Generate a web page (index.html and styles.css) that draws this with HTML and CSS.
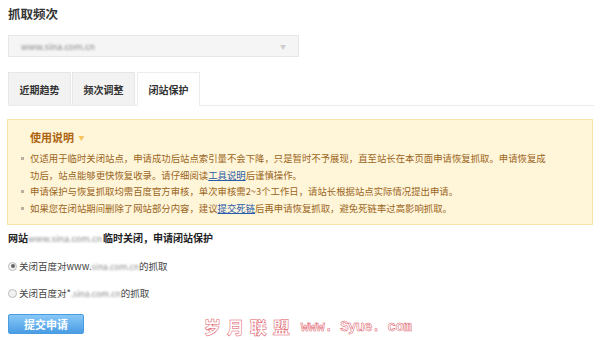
FILE: index.html
```html
<!DOCTYPE html>
<html lang="zh-CN">
<head>
  <meta charset="UTF-8" />
  <title>抓取频次 - 闭站保护</title>
  <link rel="stylesheet" href="styles.css">
</head>
<body>
  <div class="page">
    <h3 class="title">抓取频次</h3>

    <div class="site-select">
      <span class="blur">www.sina.com.cn</span>
      <span class="arrow">▼</span>
    </div>

    <div class="tabs">
      <a href="#" class="tab">近期趋势</a>
      <a href="#" class="tab">频次调整</a>
      <a href="#" class="tab active">闭站保护</a>
    </div>

    <div class="notice">
      <div class="notice-title">使用说明 <span class="caret">▼</span></div>
      <ul class="notice-list">
        <li>仅适用于临时关闭站点，申请成功后站点索引量不会下降，只是暂时不予展现，直至站长在本页面申请恢复抓取。申请恢复成功后，站点能够更快恢复收录。请仔细阅读<a href="#">工具说明</a>后谨慎操作。</li>
        <li>申请保护与恢复抓取均需百度官方审核，单次审核需2~3个工作日，请站长根据站点实际情况提出申请。</li>
        <li>如果您在闭站期间删除了网站部分内容，建议<a href="#">提交死链</a>后再申请恢复抓取，避免死链率过高影响抓取。</li>
      </ul>
    </div>

    <div class="apply-title">网站<span class="blur domain">www.sina.com.cn</span>临时关闭，申请闭站保护</div>

    <div class="option">
      <span class="radio checked"></span>关闭百度对www.<span class="blur">sina.com.cn</span>的抓取
    </div>
    <div class="option">
      <span class="radio"></span>关闭百度对*<span class="blur">.sina.com.cn</span>的抓取
    </div>

    <div class="actions">
      <button class="submit-btn">提交申请</button>
      <div class="watermark">
        <span class="wm-cn">岁 月 联 盟</span>
        <span class="wm-en">www. Syue. com</span>
      </div>
    </div>
  </div>
</body>
</html>
```

FILE: styles.css
```css
body {
  margin: 0;
  padding: 0;
  background: #fff;
  font-family: "Noto Sans CJK SC", "Noto Sans", sans-serif;
  color: #333;
}

.page {
  padding: 6px 7px 0 8px;
}

.title {
  margin: 0;
  font-size: 12.5px;
  line-height: 16px;
  font-weight: bold;
  color: #333;
}

.blur {
  color: #888;
  filter: blur(1.3px);
}

.site-select {
  margin-top: 13px;
  height: 20px;
  border: 1px solid #e6e6e6;
  background: #f5f5f5;
  display: flex;
  justify-content: space-between;
  align-items: center;
  padding: 0 12px;
  width: 265px;
  font-size: 9px;
}

.site-select .arrow {
  color: #ccc;
  font-size: 6px;
}

.tabs {
  margin-top: 15px;
  display: flex;
  gap: 1px;
  height: 34px;
  border-bottom: 1px solid #ececec;
  box-sizing: border-box;
  width: 586px;
}

.tab {
  width: 63px;
  height: 33px;
  display: flex;
  align-items: center;
  justify-content: center;
  background: #f2f2f2;
  border: 1px solid #e6e6e6;
  border-bottom: none;
  box-sizing: border-box;
  font-size: 10px;
  font-weight: bold;
  color: #333;
  text-decoration: none;
}

.tab.active {
  margin-left: 1px;
  background: #fff;
  height: 34px;
  border-color: #ececec;
}

.notice {
  margin-top: 13px;
  margin-left: -1px;
  width: 586px;
  height: 106px;
  box-sizing: border-box;
  background: #fff5d9;
  border: 1px solid #f6e3ad;
  padding: 9px 42px 0 22px;
  color: #9a651c;
}

.notice-title {
  font-size: 11px;
  line-height: 16px;
  font-weight: bold;
  color: #ad640f;
}

.caret {
  color: #f7c35a;
  font-size: 6px;
  vertical-align: 2px;
  margin-left: 2px;
}

.notice-list {
  list-style: none;
  margin: 4px 0 0;
  padding: 0;
  font-size: 9.4px;
  line-height: 16.5px;
}

.notice-list li {
  position: relative;
}

.notice-list li::before {
  content: "";
  position: absolute;
  left: -9px;
  top: 7px;
  width: 3px;
  height: 3px;
  background: #b8b0a0;
}

.notice-list a {
  color: #2a5caa;
  text-decoration: underline;
}

.apply-title {
  margin-top: 5px;
  font-size: 10px;
  line-height: 16px;
  font-weight: bold;
  color: #222;
}

.apply-title .domain {
  display: inline-block;
  width: 75px;
  font-weight: normal;
  font-size: 9px;
}

.option {
  margin-top: 11px;
  font-size: 9.5px;
  line-height: 16px;
  color: #444;
  display: flex;
  align-items: center;
}

.option .blur {
  font-size: 8.5px;
}

.radio {
  width: 9px;
  height: 9px;
  border: 1px solid #bbb;
  border-radius: 50%;
  background: #f2f2f2;
  margin-right: 2px;
  box-sizing: border-box;
  display: inline-flex;
  align-items: center;
  justify-content: center;
}

.radio.checked::after {
  content: "";
  width: 4px;
  height: 4px;
  border-radius: 50%;
  background: #666;
}

.actions {
  margin-top: 13px;
  display: flex;
  align-items: flex-start;
}

.submit-btn {
  width: 76px;
  height: 20px;
  border: 1px solid #4b9be0;
  border-radius: 2px;
  background: linear-gradient(to bottom, #88c8f7, #4a9de4);
  color: #fff;
  font-family: "Noto Sans CJK SC", sans-serif;
  font-size: 11px;
  font-weight: bold;
  padding: 0;
}

.watermark {
  margin-left: 120px;
  margin-top: 3px;
  display: flex;
  align-items: center;
  gap: 10px;
  line-height: 20px;
  color: #fff;
  -webkit-text-stroke: 0.5px #e0545f;
}

.wm-cn {
  font-size: 17px;
  font-weight: 900;
  white-space: pre;
  letter-spacing: 1px;
}

.wm-en {
  font-family: "Liberation Mono", monospace;
  font-size: 14px;
  font-weight: bold;
  letter-spacing: -0.5px;
}
```
